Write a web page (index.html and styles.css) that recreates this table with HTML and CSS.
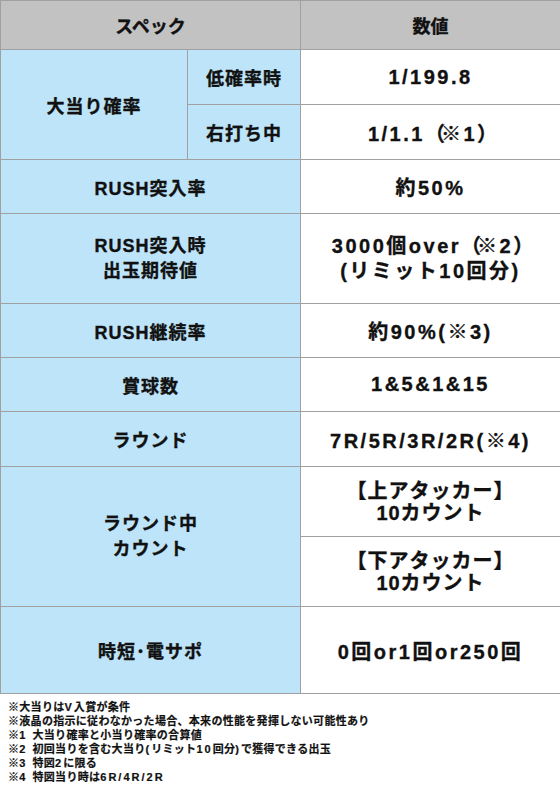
FILE: index.html
```html
<!DOCTYPE html>
<html lang="ja">
<head>
<meta charset="utf-8">
<link rel="stylesheet" href="styles.css">
</head>
<body>
<table class="spec">
  <colgroup>
    <col class="c1"><col class="c2"><col class="c3">
  </colgroup>
  <tr class="h49">
    <th class="head" colspan="2">スペック</th>
    <th class="head">数値</th>
  </tr>
  <tr class="h55">
    <th class="lab" rowspan="2">大当り確率</th>
    <th class="lab">低確率時</th>
    <td class="val">1/199.8</td>
  </tr>
  <tr class="h55">
    <th class="lab">右打ち中</th>
    <td class="val">1/1.1<span class="fw">（</span>※1<span class="fw">）</span></td>
  </tr>
  <tr class="h54">
    <th class="lab" colspan="2">RUSH突入率</th>
    <td class="val">約50%</td>
  </tr>
  <tr class="h90">
    <th class="lab two" colspan="2">RUSH突入時<br>出玉期待値</th>
    <td class="val two">3000個over<span class="fw">（</span>※2<span class="fw">）</span><br>(リミット10回分)</td>
  </tr>
  <tr class="h54">
    <th class="lab" colspan="2">RUSH継続率</th>
    <td class="val">約90%(※3)</td>
  </tr>
  <tr class="h54">
    <th class="lab" colspan="2">賞球数</th>
    <td class="val">1&amp;5&amp;1&amp;15</td>
  </tr>
  <tr class="h55">
    <th class="lab" colspan="2">ラウンド</th>
    <td class="val">7R/5R/3R/2R(※4)</td>
  </tr>
  <tr class="h70">
    <th class="lab two" colspan="2" rowspan="2">ラウンド中<br>カウント</th>
    <td class="val att">【上アタッカー】<br>10カウント</td>
  </tr>
  <tr class="h70">
    <td class="val att">【下アタッカー】<br>10カウント</td>
  </tr>
  <tr class="h87">
    <th class="lab" colspan="2">時短･電サポ</th>
    <td class="val">0回or1回or250回</td>
  </tr>
</table>
<div class="notes">
  <p>※大当りは<span class="lat">V</span>入賞が条件</p>
  <p>※液晶の指示に従わなかった場合、本来の性能を発揮しない可能性あり</p>
  <p>※<span class="lat">1 </span>大当り確率と小当り確率の合算値</p>
  <p>※<span class="lat">2 </span>初回当りを含む大当り<span class="lat">(</span>リミット<span class="lat">10</span>回分<span class="lat">)</span>で獲得できる出玉</p>
  <p>※<span class="lat">3 </span>特図<span class="lat">2</span>に限る</p>
  <p>※<span class="lat">4 </span>特図当り時は<span class="lat">6R/4R/2R</span></p>
</div>
</body>
</html>
```

FILE: styles.css
```css
html, body {
  margin: 0;
  padding: 0;
  background: #ffffff;
}
body {
  width: 560px;
  font-family: "Liberation Sans", "Noto Sans CJK JP", sans-serif;
  font-weight: bold;
  color: #111111;
}
.spec {
  border-collapse: collapse;
  table-layout: fixed;
  width: 560px;
}
.c1 { width: 187px; }
.c2 { width: 113px; }
.c3 { width: 260px; }
.spec th, .spec td {
  border: 1px solid #a0a0a0;
  padding: 0;
  text-align: center;
  vertical-align: middle;
  font-weight: bold;
  -webkit-text-stroke: 0.35px #111111;
}
.h49 { height: 49px; }
.h54 { height: 54px; }
.h55 { height: 55px; }
.h70 { height: 70px; }
.h87 { height: 87px; }
.h90 { height: 90px; }
.head {
  background: #c2c2c2;
  border-color: #8e8e8e;
  font-size: 18px;
  font-family: "Noto Sans CJK JP", sans-serif;
}
.lab {
  background: #bde4f8;
  font-size: 18px;
  letter-spacing: 1px;
}
.val {
  background: #ffffff;
  font-size: 20px;
  letter-spacing: 2.5px;
}
.two { line-height: 25px; }
.att { line-height: 22px; letter-spacing: 1px; }
.fw { letter-spacing: -4px; }
.notes {
  padding: 6px 0 0 8px;
}
.notes p {
  margin: 0;
  font-size: 11px;
  line-height: 14px;
  letter-spacing: 0.3px;
  -webkit-text-stroke: 0.2px #111111;
}
.notes .lat {
  letter-spacing: 2px;
}
```
